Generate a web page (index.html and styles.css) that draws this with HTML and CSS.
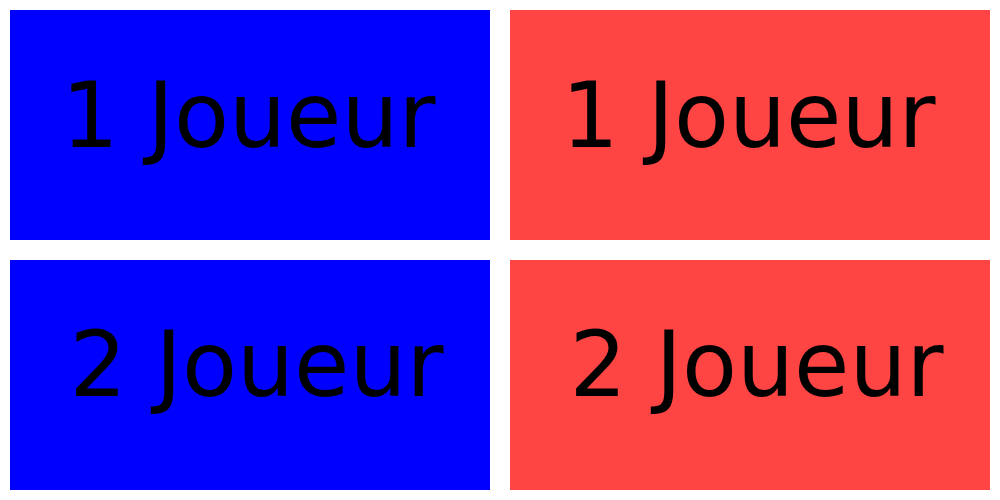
FILE: index.html
```html
<!DOCTYPE html>
<html lang="fr">
<head>
  <meta charset="UTF-8">
  <title>Menu</title>
  <link rel="stylesheet" href="styles.css">
</head>
<body>
  <div class="menu">
    <div class="choice blue top">1 Joueur</div>
    <div class="choice red top">1 Joueur</div>
    <div class="choice blue bottom">2 Joueur</div>
    <div class="choice red bottom">2 Joueur</div>
  </div>
</body>
</html>
```
FILE: styles.css
```css
body {
  margin: 0;
  background: white;
  font-family: "DejaVu Sans", sans-serif;
}

.menu {
  display: grid;
  grid-template-columns: 480px 480px;
  grid-template-rows: 230px 230px;
  gap: 20px;
  padding: 10px;
}

.choice {
  display: flex;
  align-items: center;
  justify-content: center;
  font-size: 90px;
  color: #000;
  box-sizing: border-box;
}

.top {
  padding: 0 3px 20px 0;
}

.bottom {
  padding: 0 0 22px 13px;
}

.blue {
  background-color: #0000ff;
}

.red {
  background-color: #ff4444;
}
```
